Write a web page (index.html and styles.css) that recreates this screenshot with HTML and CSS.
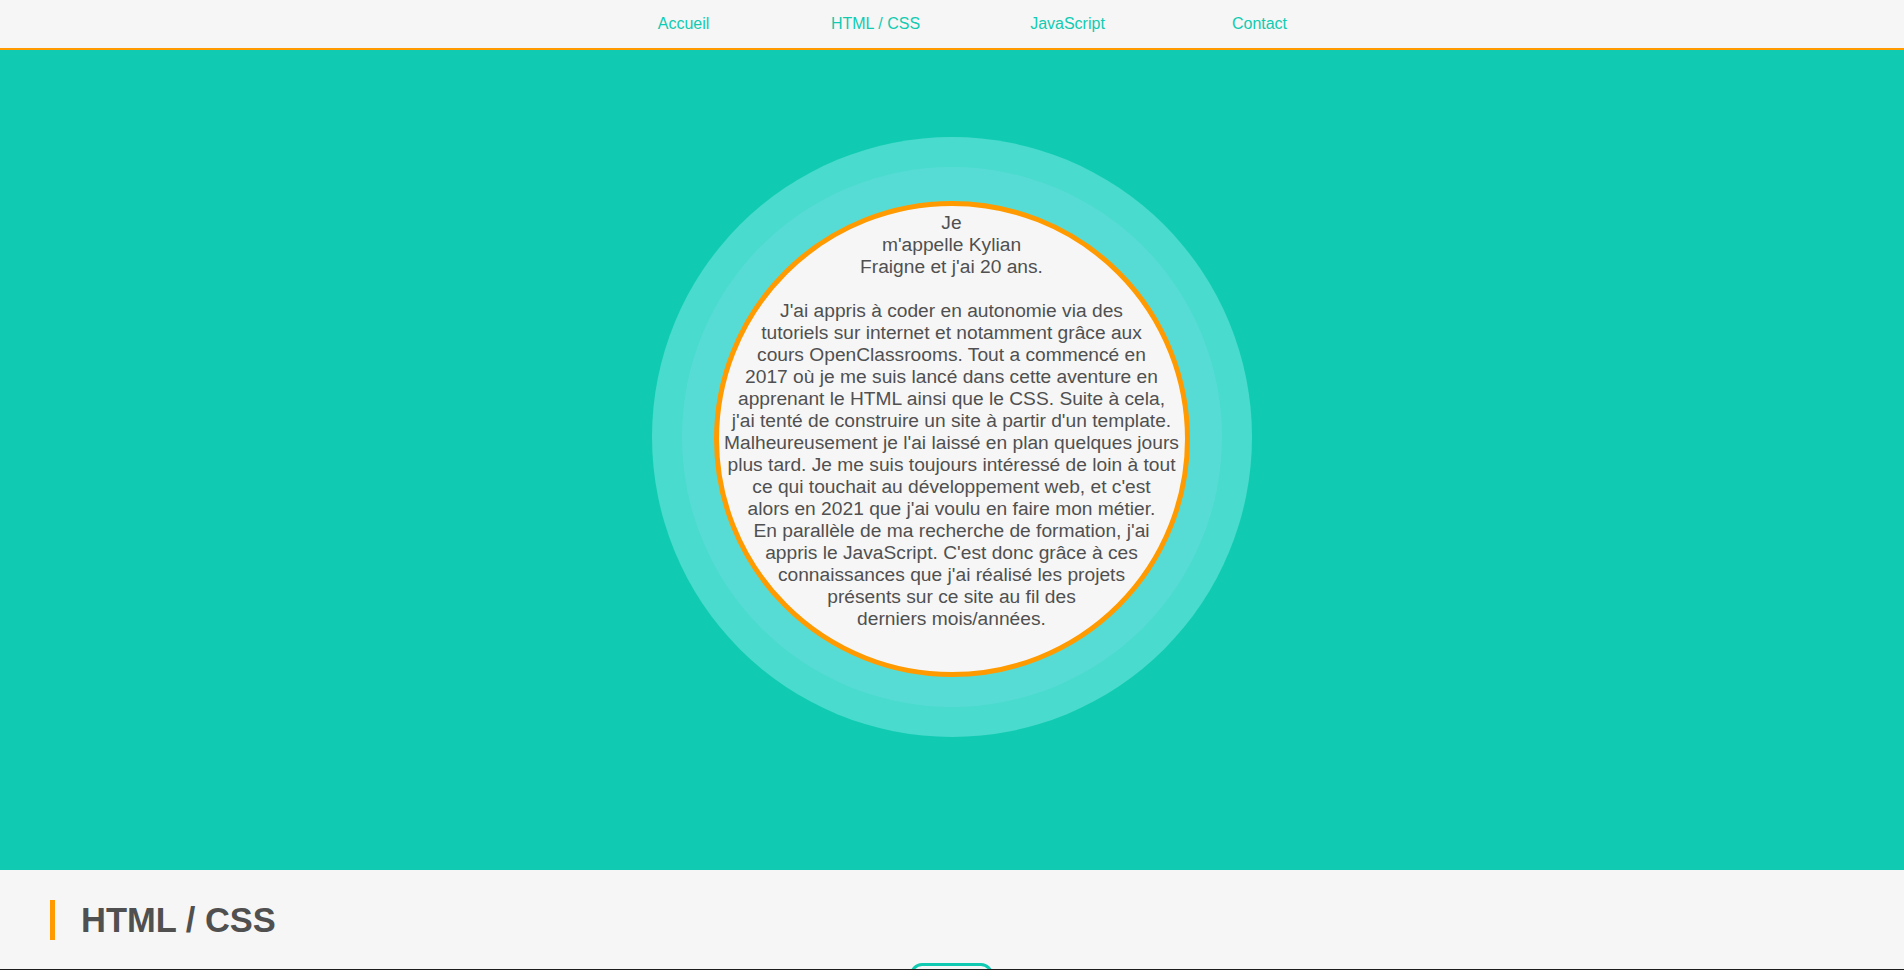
FILE: index.html
```html
<!DOCTYPE html>
<html lang="fr">
<head>
<meta charset="utf-8">
<title>Kylian Fraigne</title>
<link rel="stylesheet" href="styles.css">
</head>
<body>
<header class="topbar">
  <nav>
    <ul class="menu">
      <li><a href="#">Accueil</a></li>
      <li><a href="#">HTML / CSS</a></li>
      <li><a href="#">JavaScript</a></li>
      <li><a href="#">Contact</a></li>
    </ul>
  </nav>
</header>
<section class="hero">
  <div class="ring-outer">
    <div class="ring-mid">
      <div class="bio">
        <p>Je<br>m'appelle Kylian<br>Fraigne et j'ai 20 ans.</p>
        <p>J'ai appris à coder en autonomie via des<br>tutoriels sur internet et notamment grâce aux<br>cours OpenClassrooms. Tout a commencé en<br>2017 où je me suis lancé dans cette aventure en<br>apprenant le HTML ainsi que le CSS. Suite à cela,<br>j'ai tenté de construire un site à partir d'un template.<br>Malheureusement je l'ai laissé en plan quelques jours<br>plus tard. Je me suis toujours intéressé de loin à tout<br>ce qui touchait au développement web, et c'est<br>alors en 2021 que j'ai voulu en faire mon métier.<br>En parallèle de ma recherche de formation, j'ai<br>appris le JavaScript. C'est donc grâce à ces<br>connaissances que j'ai réalisé les projets<br>présents sur ce site au fil des<br>derniers mois/années.</p>
      </div>
    </div>
  </div>
</section>
<section class="projects">
  <h2 class="section-title">HTML / CSS</h2>
  <div class="filters">
    <div class="filter-btn"></div>
  </div>
</section>
</body>
</html>
```
FILE: styles.css
```css
* { box-sizing: border-box; }
html, body { margin: 0; padding: 0; }
body {
  background: #f6f6f6;
  font-family: "Liberation Sans", Arial, sans-serif;
  color: #525252;
  overflow: hidden;
}
.topbar {
  height: 50px;
  background: #f6f6f6;
  border-bottom: 2px solid #ff9a00;
}
.menu {
  list-style: none;
  margin: 0;
  padding: 0 1px 0 40px;
  height: 48px;
  display: flex;
  justify-content: center;
  align-items: center;
}
.menu li {
  width: 192px;
  text-align: center;
}
.menu a {
  color: #10cbb1;
  text-decoration: none;
  font-size: 16px;
}
.hero {
  height: 820px;
  background: #10cbb1;
  display: flex;
  justify-content: center;
  align-items: flex-start;
  padding: 87px 1px 0 0;
}
.ring-outer {
  width: 600px;
  height: 600px;
  border-radius: 50%;
  background: #49dbcd;
  display: flex;
  align-items: center;
  justify-content: center;
}
.ring-mid {
  width: 540px;
  height: 540px;
  border-radius: 50%;
  background: #57dcd5;
  display: flex;
  align-items: center;
  justify-content: center;
  padding-top: 4px;
}
.bio {
  width: 476px;
  height: 476px;
  flex: none;
  border-radius: 50%;
  border: 5px solid #ff9a00;
  background: #f6f6f6;
  text-align: center;
  padding-top: 6px;
  font-size: 19.2px;
  line-height: 22px;
  color: #505050;
}
.bio p {
  margin: 0 0 22px;
  white-space: nowrap;
}
.projects {
  height: 100px;
  background: #f6f6f6;
  border-bottom: 1px solid #1c1c1c;
  overflow: hidden;
  padding-top: 30px;
}
.section-title {
  margin: 0 0 0 50px;
  border-left: 5px solid #ff9a00;
  padding-left: 26px;
  font-size: 34.5px;
  line-height: 40px;
  font-weight: bold;
  color: #505050;
}
.filters {
  display: flex;
  justify-content: center;
  padding: 23px 1px 0 0;
}
.filter-btn {
  width: 83px;
  height: 40px;
  border: 3px solid #10cbb1;
  border-radius: 12px;
}
```
